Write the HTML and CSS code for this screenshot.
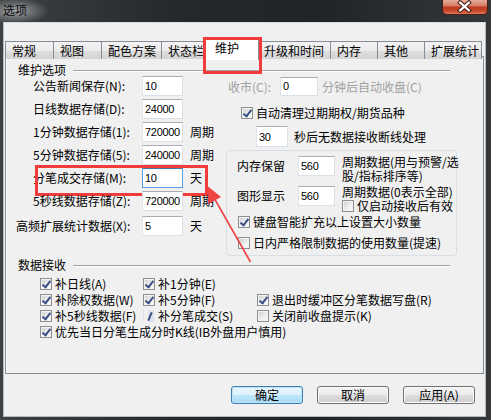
FILE: index.html
```html
<!DOCTYPE html>
<html lang="zh-CN">
<head>
    <meta charset="UTF-8">
    <title>选项</title>
    <link rel="stylesheet" href="styles.css">
</head>
<body>
    <div class="window">
        <div class="titlebar">
            <span class="title">选项</span>
            <div class="close">
                <svg width="46" height="15" viewBox="0 0 46 15">
                    <path d="M18.5 3.5 L27.5 11.5 M27.5 3.5 L18.5 11.5" stroke="#3b1610" stroke-width="4.2" stroke-linecap="square"/>
                    <path d="M18.5 3.5 L27.5 11.5 M27.5 3.5 L18.5 11.5" stroke="#fff" stroke-width="2.2" stroke-linecap="square"/>
                </svg>
            </div>
        </div>

        <div class="client">
            <ul class="tabs">
                <li class="tab">常规</li>
                <li class="tab">视图</li>
                <li class="tab">配色方案</li>
                <li class="tab">状态栏</li>
                <li class="tab active">维护</li>
                <li class="tab">升级和时间</li>
                <li class="tab">内存</li>
                <li class="tab">其他</li>
                <li class="tab">扩展统计</li>
            </ul>

            <div class="panel">
                <div class="group_head"><span>维护选项</span><i></i></div>

                <div class="maint">
                    <div class="left_col">
                        <div class="field"><span class="lbl">公告新闻保存(N):</span><input type="text" value="10" readonly><span class="unit"></span></div>
                        <div class="field"><span class="lbl">日线数据存储(D):</span><input type="text" value="24000" readonly><span class="unit"></span></div>
                        <div class="field"><span class="lbl">1分钟数据存储(1):</span><input type="text" value="720000" readonly><span class="unit">周期</span></div>
                        <div class="field"><span class="lbl">5分钟数据存储(5):</span><input type="text" value="240000" readonly><span class="unit">周期</span></div>
                        <div class="field marked"><span class="lbl">分笔成交存储(M):</span><input class="focus" type="text" value="10" readonly><span class="unit">天</span></div>
                        <div class="field"><span class="lbl">5秒线数据存储(Z):</span><input type="text" value="720000" readonly><span class="unit">周期</span></div>
                        <div class="field wide"><span class="lbl">高频扩展统计数据(X):</span><input type="text" value="5" readonly><span class="unit">天</span></div>
                    </div>

                    <div class="right_col">
                        <div class="close_row">
                            <span class="lbl dis">收市(C):</span>
                            <input type="text" value="0" readonly>
                            <span class="dis">分钟后自动收盘(C)</span>
                        </div>
                        <div class="check auto_clean"><span class="cb on"></span>自动清理过期期权/期货品种</div>
                        <div class="sec_row">
                            <input type="text" value="30" readonly>
                            <span>秒后无数据接收断线处理</span>
                        </div>

                        <div class="mem_box">
                            <div class="mem_row">
                                <span class="lbl">内存保留</span>
                                <input type="text" value="560" readonly>
                                <div class="desc">
                                    <div>周期数据(用与预警/选</div>
                                    <div>股/指标排序等)</div>
                                </div>
                            </div>
                            <div class="mem_row second">
                                <span class="lbl">图形显示</span>
                                <input type="text" value="560" readonly>
                                <div class="desc">
                                    <div>周期数据(0表示全部)</div>
                                    <div class="check"><span class="cb"></span>仅启动接收后有效</div>
                                </div>
                            </div>
                            <div class="check box_check"><span class="cb on"></span>键盘智能扩充以上设置大小数量</div>
                            <div class="check box_check last"><span class="cb"></span>日内严格限制数据的使用数量(提速)</div>
                        </div>
                    </div>
                </div>

                <div class="group_head recv_head"><span>数据接收</span><i></i></div>

                <div class="recv">
                    <div class="check"><span class="cb on"></span>补日线(A)</div>
                    <div class="check"><span class="cb on"></span>补1分钟(E)</div>
                    <div></div>
                    <div class="check"><span class="cb on"></span>补除权数据(W)</div>
                    <div class="check"><span class="cb on"></span>补5分钟(F)</div>
                    <div class="check"><span class="cb on"></span>退出时缓冲区分笔数据写盘(R)</div>
                    <div class="check"><span class="cb on"></span>补5秒线数据(F)</div>
                    <div class="check"><span class="cb half"></span>补分笔成交(S)</div>
                    <div class="check"><span class="cb"></span>关闭前收盘提示(K)</div>
                    <div class="check full"><span class="cb on"></span>优先当日分笔生成分时K线(IB外盘用户慎用)</div>
                </div>
            </div>

            <div class="buttons">
                <button class="btn default">确定</button>
                <button class="btn">取消</button>
                <button class="btn">应用(A)</button>
            </div>
        </div>

        <!-- annotation arrow drawn over the dialog -->
        <svg class="arrow" width="491" height="420" viewBox="0 0 491 420">
            <line x1="250.5" y1="262" x2="213" y2="196" stroke="#f04343" stroke-width="1.6"/>
            <polygon points="207.5,186 221,197 208,204" fill="#f04343"/>
        </svg>
    </div>
</body>
</html>
```

FILE: styles.css
```css
*{
    padding: 0;
    margin: 0;
    box-sizing: border-box;
}

body{
    width: 491px;
    height: 420px;
    overflow: hidden;
    background-color: #272b2d;
    font-family: "Noto Sans CJK SC", "Liberation Sans", sans-serif;
    font-size: 12px;
    color: #000;
}

.window{
    position: relative;
    width: 491px;
    height: 420px;
    display: flex;
    flex-direction: column;
    background: linear-gradient(90deg, #3e4143, #25292c 35%, #1f2427 65%, #34383a);
}

/* title bar */
.titlebar{
    height: 22px;
    display: flex;
    justify-content: space-between;
    align-items: flex-start;
    background: radial-gradient(ellipse 34px 13px at 15px 11px, rgba(225,228,230,0.6), rgba(225,228,230,0));
}

.titlebar .title{
    padding: 2px 0 0 3px;
    line-height: 16px;
    color: #0c0c0c;
}

.titlebar .close{
    width: 46px;
    height: 15px;
    margin-right: 3px;
    border: 1px solid #4a1d16;
    border-top: none;
    border-radius: 0 0 5px 5px;
    background: linear-gradient(#e8ab9c, #d67d66 40%, #bd3a1e 52%, #c5462a 78%, #df7a5d);
    display: flex;
}

.titlebar .close svg{
    margin: -1px 0 0 -1px;
}

/* client area */
.client{
    flex: 1;
    margin: 0 5px 3px 3px;
    padding: 15px 1px 0 1px;
    background-color: #f0f0f0;
    border: 1px solid #b6bbc0;
    border-top-color: #d8dadc;
}

.tabs{
    position: relative;
    z-index: 1;
    display: grid;
    grid-template-columns: 48px 48px 60px 43px 54px 72px 47px 47px 58px;
    height: 18px;
    align-items: end;
    list-style: none;
}

.tab{
    height: 18px;
    padding: 1px 0 0 6px;
    line-height: 15px;
    white-space: nowrap;
    overflow: hidden;
    border: 1px solid #898c95;
    border-bottom: none;
    border-right: none;
    background: linear-gradient(#f3f3f3, #ebebeb 50%, #dedede 51%, #d4d4d4);
}

.tab.active{
    position: relative;
    height: 22px;
    margin: 0 -1px -1px -1px;
    padding: 1px 0 0 11px;
    border-right: 1px solid #898c95;
    background: #fff;
    overflow: visible;
}

.tab.active + .tab{
    border-left: none;
}

.tab:last-child{
    border-right: 1px solid #898c95;
}

.tab.active::after{
    content: "";
    position: absolute;
    left: -1px;
    top: -2px;
    width: 53px;
    height: 31px;
    border: 3px solid #f13c3c;
}

.panel{
    height: 318px;
    border: 1px solid #898c95;
    background-color: #f0f0f0;
    box-shadow: inset 1px 1px 0 #fff;
}

/* etched group header */
.group_head{
    display: flex;
    align-items: center;
    height: 13px;
    margin: 6px 33px 0 12px;
    line-height: 13px;
}

.group_head i{
    flex: 1;
    height: 2px;
    margin: 2px 0 0 7px;
    border-top: 1px solid #a0a0a0;
    border-bottom: 1px solid #fff;
}

.group_head.recv_head{
    margin-top: 2px;
}

.maint{
    display: flex;
    padding-left: 27px;
}

input{
    height: 20px;
    padding: 0 1px 0 2px;
    font-family: "Liberation Sans", sans-serif;
    font-size: 11px;
    letter-spacing: -0.3px;
    color: #000;
    background-color: #fff;
    border: 1px solid #dbdfe6;
    border-top-color: #abadb3;
    border-left-color: #e2e3ea;
    outline: none;
}

input.focus{
    border-color: #569de5;
    border-top-color: #3d7bad;
}

.left_col{
    width: 193px;
    display: flex;
    flex-direction: column;
    gap: 3px;
}

.field{
    position: relative;
    display: flex;
    align-items: center;
    height: 20px;
}

.field .lbl{
    width: 109px;
    line-height: 14px;
    white-space: nowrap;
}

.field input{
    width: 41px;
}

.field .unit{
    margin-left: 7px;
    line-height: 14px;
}

.field.wide{
    margin-top: 2px;
}

.field.wide .lbl{
    width: 126px;
    margin-left: -17px;
}

.field.marked::after{
    content: "";
    position: absolute;
    left: 2px;
    top: -3px;
    width: 167px;
    height: 25px;
    border: 3px solid #f13c3c;
}

.right_col{
    width: 231px;
}

.dis{
    color: #a0a0a0;
}

.close_row{
    display: flex;
    align-items: center;
    height: 20px;
    white-space: nowrap;
}

.close_row .lbl{
    width: 54px;
    padding-left: 2px;
}

.close_row input{
    width: 38px;
    height: 19px;
    margin-right: 4px;
}

/* checkbox */
.check{
    display: flex;
    align-items: center;
    height: 14px;
    line-height: 14px;
    white-space: nowrap;
}

.cb{
    position: relative;
    flex: none;
    width: 12px;
    height: 12px;
    margin-right: 3px;
    border: 1px solid #8e8f8f;
    background: linear-gradient(135deg, #c9cbcd, #eeeeee 55%, #fbfbfb);
    box-shadow: inset 0 0 0 1px #f4f4f4;
}

.cb.on::after{
    content: "";
    position: absolute;
    left: 3px;
    top: 0px;
    width: 3px;
    height: 7px;
    border: solid #3b4f86;
    border-width: 0 2px 2px 0;
    transform: rotate(38deg);
}

.cb.half{
    border-color: transparent;
    background: linear-gradient(90deg, transparent 45%, #dde3ee 45%);
    box-shadow: none;
}

.cb.half::after{
    content: "";
    position: absolute;
    left: 5px;
    top: 1px;
    width: 2px;
    height: 9px;
    background-color: #3b4f86;
    transform: rotate(22deg);
}

.auto_clean{
    margin-top: 10px;
    padding-left: 15px;
}

.sec_row{
    display: flex;
    align-items: center;
    margin-top: 6px;
    padding-left: 30px;
    white-space: nowrap;
}

.sec_row input{
    width: 32px;
    height: 21px;
    margin-right: 6px;
}

.mem_box{
    height: 106px;
    margin-top: 3px;
    padding: 5px 0 0 10px;
    border: 1px solid #d5dfe5;
    border-radius: 4px;
}

.mem_row{
    display: grid;
    grid-template-columns: 54px 37px auto;
    column-gap: 7px;
    align-items: start;
    height: 28px;
}

.mem_row .lbl{
    line-height: 20px;
}

.mem_row .desc{
    margin-top: -1px;
    line-height: 14px;
    white-space: nowrap;
}

.mem_row.second{
    margin-top: 2px;
}

.box_check{
    margin: 1px 0 0 1px;
}

.box_check.last{
    margin-top: 7px;
}

.recv{
    display: grid;
    grid-template-columns: 103px 114px auto;
    grid-auto-rows: 16px;
    align-items: center;
    margin-top: 5px;
    padding-left: 34px;
}

.recv .full{
    grid-column: 1 / -1;
}

/* dialog buttons */
.buttons{
    display: flex;
    justify-content: flex-end;
    gap: 14px;
    margin-top: 12px;
    padding-right: 9px;
}

.btn{
    width: 72px;
    height: 18px;
    font-family: inherit;
    font-size: 12px;
    line-height: 16px;
    color: #000;
    border: 1px solid #707070;
    border-radius: 3px;
    background: linear-gradient(#f2f2f2, #ebebeb 50%, #dddddd 51%, #cfcfcf);
    box-shadow: inset 0 0 0 1px #fbfbfb;
}

.btn.default{
    border-color: #3c7fb1;
    box-shadow: inset 0 0 0 1px #bfe4f9;
    background: linear-gradient(#eaf6fd, #d9f0fc 50%, #bee6fd 51%, #a7d9f5);
}

.arrow{
    position: absolute;
    left: 0;
    top: 0;
    pointer-events: none;
}
```
